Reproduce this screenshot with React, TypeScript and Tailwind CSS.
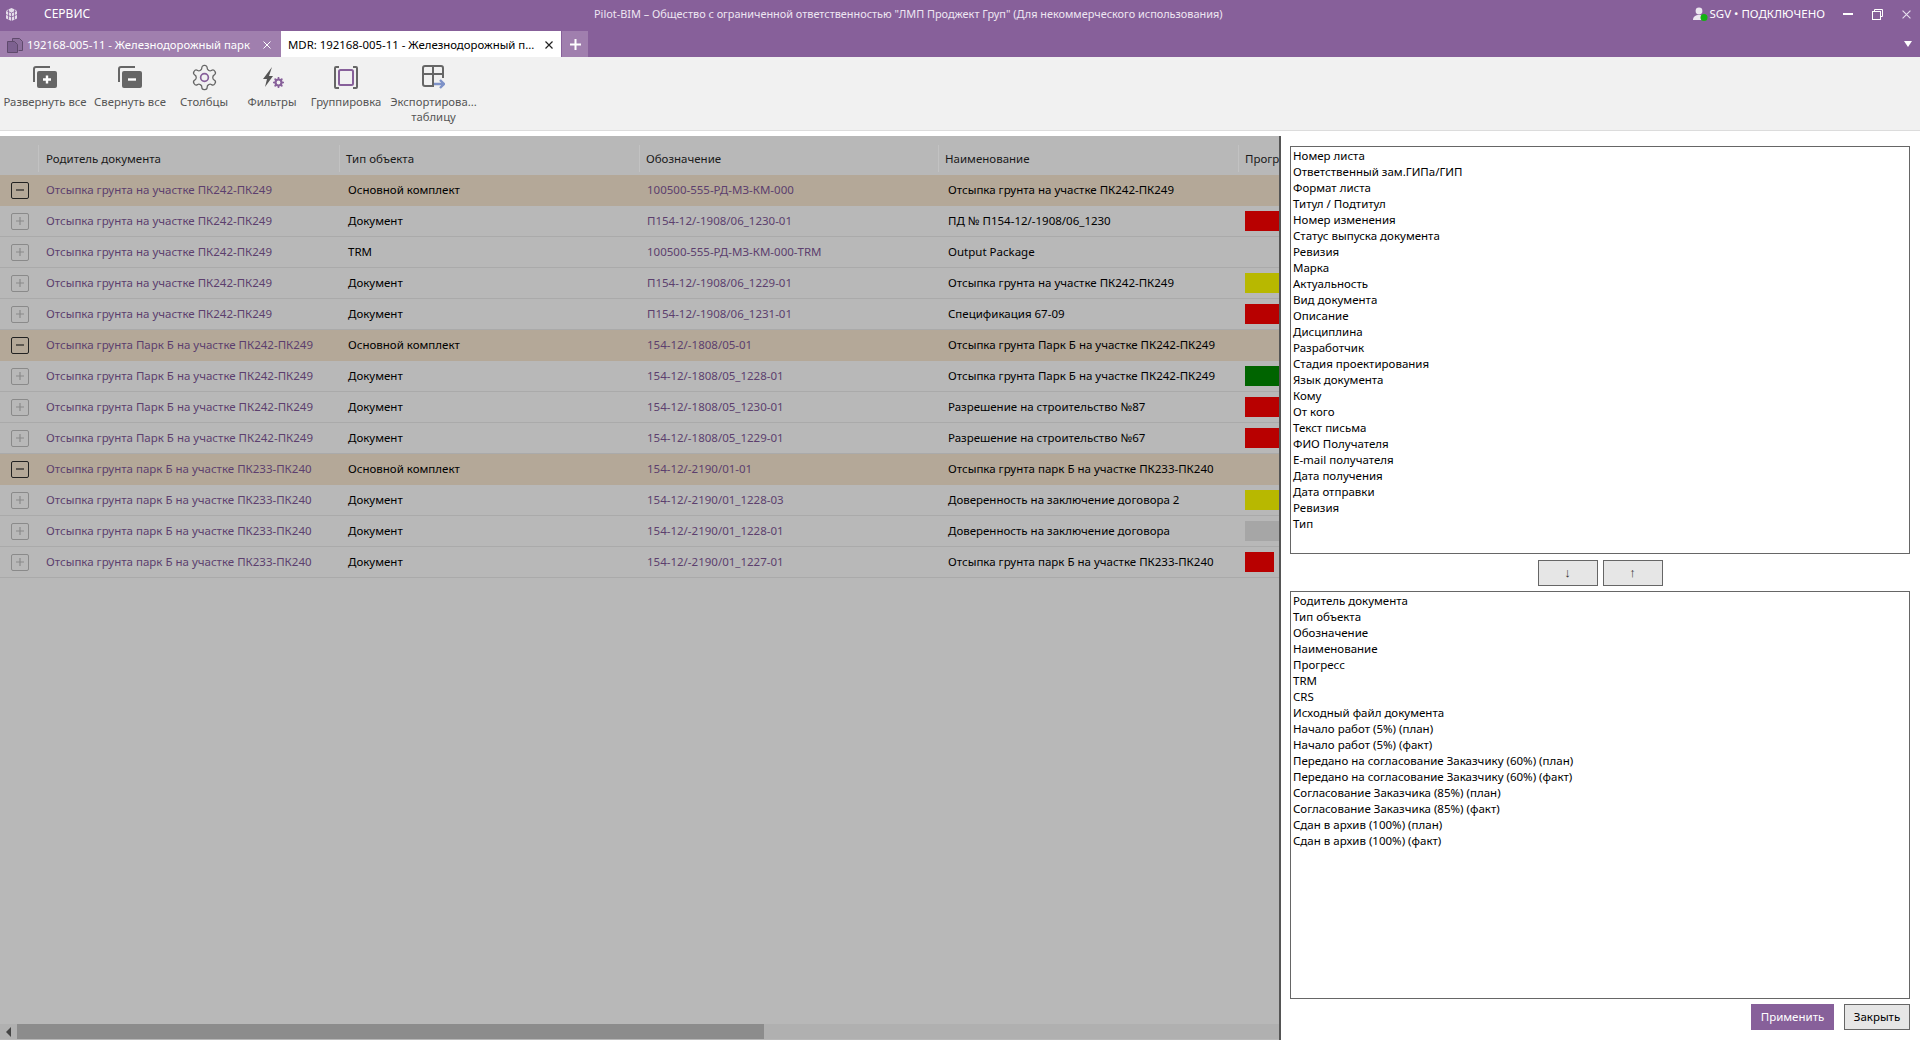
const FONT = "font-['Noto_Sans','Open_Sans',sans-serif]";

const GEAR_PATH =
  "M12.22 2h-.44a2 2 0 0 0-2 2v.18a2 2 0 0 1-1 1.73l-.43.25a2 2 0 0 1-2 0l-.15-.08a2 2 0 0 0-2.73.73l-.22.38a2 2 0 0 0 .73 2.73l.15.1a2 2 0 0 1 1 1.72v.51a2 2 0 0 1-1 1.74l-.15.09a2 2 0 0 0-.73 2.73l.22.38a2 2 0 0 0 2.73.73l.15-.08a2 2 0 0 1 2 0l.43.25a2 2 0 0 1 1 1.73V20a2 2 0 0 0 2 2h.44a2 2 0 0 0 2-2v-.18a2 2 0 0 1 1-1.73l.43-.25a2 2 0 0 1 2 0l.15.08a2 2 0 0 0 2.73-.73l.22-.39a2 2 0 0 0-.73-2.73l-.15-.08a2 2 0 0 1-1-1.74v-.5a2 2 0 0 1 1-1.74l.15-.09a2 2 0 0 0 .73-2.73l-.22-.38a2 2 0 0 0-2.73-.73l-.15.08a2 2 0 0 1-2 0l-.43-.25a2 2 0 0 1-1-1.73V4a2 2 0 0 0-2-2z";

type Row = { parent: string; type: string; code: string; name: string; progress?: string; main?: boolean };

const P1 = "Отсыпка грунта на участке ПК242-ПК249";
const P2 = "Отсыпка грунта Парк Б на участке ПК242-ПК249";
const P3 = "Отсыпка грунта парк Б на участке ПК233-ПК240";

const rows: Row[] = [
  { parent: P1, type: "Основной комплект", code: "100500-555-РД-МЗ-КМ-000", name: P1, main: true },
  { parent: P1, type: "Документ", code: "П154-12/-1908/06_1230-01", name: "ПД № П154-12/-1908/06_1230", progress: "bg-[#b80000]" },
  { parent: P1, type: "TRM", code: "100500-555-РД-МЗ-КМ-000-TRM", name: "Output Package" },
  { parent: P1, type: "Документ", code: "П154-12/-1908/06_1229-01", name: P1, progress: "bg-[#b8b800]" },
  { parent: P1, type: "Документ", code: "П154-12/-1908/06_1231-01", name: "Спецификация 67-09", progress: "bg-[#b80000]" },
  { parent: P2, type: "Основной комплект", code: "154-12/-1808/05-01", name: P2, main: true },
  { parent: P2, type: "Документ", code: "154-12/-1808/05_1228-01", name: P2, progress: "bg-[#006400]" },
  { parent: P2, type: "Документ", code: "154-12/-1808/05_1230-01", name: "Разрешение на строительство №87", progress: "bg-[#b80000]" },
  { parent: P2, type: "Документ", code: "154-12/-1808/05_1229-01", name: "Разрешение на строительство №67", progress: "bg-[#b80000]" },
  { parent: P3, type: "Основной комплект", code: "154-12/-2190/01-01", name: P3, main: true },
  { parent: P3, type: "Документ", code: "154-12/-2190/01_1228-03", name: "Доверенность на заключение договора 2", progress: "bg-[#b8b800]" },
  { parent: P3, type: "Документ", code: "154-12/-2190/01_1228-01", name: "Доверенность на заключение договора", progress: "bg-[#a6a6a6]" },
  { parent: P3, type: "Документ", code: "154-12/-2190/01_1227-01", name: P3, progress: "bg-[#b80000]" },
];

const availableColumns = [
  "Номер листа", "Ответственный зам.ГИПа/ГИП", "Формат листа", "Титул / Подтитул", "Номер изменения",
  "Статус выпуска документа", "Ревизия", "Марка", "Актуальность", "Вид документа", "Описание", "Дисциплина",
  "Разработчик", "Стадия проектирования", "Язык документа", "Кому", "От кого", "Текст письма", "ФИО Получателя",
  "E-mail получателя", "Дата получения", "Дата отправки", "Ревизия", "Тип",
];

const selectedColumns = [
  "Родитель документа", "Тип объекта", "Обозначение", "Наименование", "Прогресс", "TRM", "CRS",
  "Исходный файл документа", "Начало работ (5%) (план)", "Начало работ (5%) (факт)",
  "Передано на согласование Заказчику (60%) (план)", "Передано на согласование Заказчику (60%) (факт)",
  "Согласование Заказчика (85%) (план)", "Согласование Заказчика (85%) (факт)",
  "Сдан в архив (100%) (план)", "Сдан в архив (100%) (факт)",
];

function ThinX({ size = 8, color = "#fff", width = 1 }: { size?: number; color?: string; width?: number }) {
  return (
    <svg width={size} height={size} viewBox="0 0 8 8" className="shrink-0">
      <path d="M0.5 0.5l7 7M7.5 0.5l-7 7" stroke={color} strokeWidth={width} fill="none" />
    </svg>
  );
}

function ExpandIcon({ minus }: { minus?: boolean }) {
  return (
    <svg width="24" height="22" viewBox="0 0 24 22">
      <path d="M1 16V3a2 2 0 0 1 2-2h14" fill="none" stroke="#666" strokeWidth="2" />
      <rect x="4" y="5" width="20" height="17" rx="2" fill="#666" />
      <path d={minus ? "M10 13.5h8" : "M10 13.5h8M14 9.5v8"} stroke="#fff" strokeWidth="2.4" />
    </svg>
  );
}

function GearIcon() {
  return (
    <svg width="29" height="29" viewBox="0 0 24 24" fill="none" className="shrink-0">
      <path d={GEAR_PATH} stroke="#666" strokeWidth="1.05" />
      <circle cx="12" cy="12" r="3.2" stroke="#87609a" strokeWidth="1.4" />
    </svg>
  );
}

function FilterIcon() {
  return (
    <svg width="21" height="21" viewBox="0 0 21 21" className="shrink-0 ml-[3px]">
      <path d="M9 0 0 12h4l-2 8 8-11H6z" fill="#555" />
      <circle cx="15.5" cy="15.5" r="3" fill="none" stroke="#87609a" strokeWidth="2.2" />
      <path d="M15.5 10v2M15.5 19v2M10 15.5h2M19 15.5h2M11.6 11.6l1.4 1.4M18 18l1.4 1.4M11.6 19.4l1.4-1.4M18 13l1.4-1.4" stroke="#87609a" strokeWidth="1.6" />
    </svg>
  );
}

function GroupIcon() {
  return (
    <svg width="24" height="23" viewBox="0 0 24 23" fill="none">
      <path d="M5 1H2a1 1 0 0 0-1 1v19a1 1 0 0 0 1 1h3M19 1h3a1 1 0 0 1 1 1v19a1 1 0 0 1-1 1h-3" stroke="#666" strokeWidth="2" />
      <rect x="5" y="4" width="14" height="15" rx="1.5" stroke="#87609a" strokeWidth="2" />
    </svg>
  );
}

function ExportIcon() {
  return (
    <svg width="23" height="24" viewBox="0 0 23 24" fill="none">
      <path d="M12 21H3a2 2 0 0 1-2-2V3a2 2 0 0 1 2-2h16a2 2 0 0 1 2 2v10M1 9h20M11 1v20" stroke="#666" strokeWidth="2" />
      <path d="M12 19h10M18 15l4 4-4 4" stroke="#7e92c8" strokeWidth="2.4" />
    </svg>
  );
}

function ToolButton({ width, label, sub, children }: { width: string; label: string; sub?: string; children: React.ReactNode }) {
  return (
    <div className={`flex flex-col items-center pt-2 shrink-0 ${width}`}>
      <div className="h-6 flex items-center justify-center">{children}</div>
      <div className="text-[11.3px] leading-[15px] mt-[5px] text-[#555] whitespace-nowrap">{label}</div>
      {sub && <div className="text-[11.3px] leading-[15px] text-[#555]">{sub}</div>}
    </div>
  );
}

function HeaderCell({ label, last }: { label: string; last?: boolean }) {
  return (
    <div className={`h-[27px] pl-[6px] flex items-center whitespace-nowrap overflow-hidden text-[11.5px] text-[#1a1a1a] ${last ? "" : "border-r border-[#c2c2c2]"}`}>
      {label}
    </div>
  );
}

function ColumnList({ items, className }: { items: string[]; className: string }) {
  return (
    <div className={`border border-[#666] bg-white pl-[2px] pt-[1px] text-[11.5px] text-black ${className}`}>
      {items.map((item, i) => (
        <div key={i} className="h-4 leading-4 whitespace-nowrap">{item}</div>
      ))}
    </div>
  );
}

export default function App() {
  return (
    <div className={`h-screen w-full flex flex-col overflow-hidden bg-white ${FONT}`}>
      {/* title bar */}
      <div className="h-[31px] pb-[3px] bg-[#87609a] flex items-center text-white text-[12px] shrink-0">
        <div className="w-[594px] flex items-center shrink-0">
          <svg className="ml-[5px]" width="13" height="15" viewBox="0 0 13 15" fill="none">
            <path d="M6.5 1 12 3.5v8L6.5 14 1 11.5v-8z" fill="#e4dcea" />
            <path d="M1 3.5 6.5 6 12 3.5M6.5 6v8M3.5 2.5v10M9.5 2.5v10M1 7.5l5.5 2.5L12 7.5" stroke="#87609a" strokeWidth="0.8" />
          </svg>
          <span className="ml-[26px]">СЕРВИС</span>
        </div>
        <div className="whitespace-nowrap text-[10.9px] text-[#eee6f2]">
          Pilot-BIM – Общество с ограниченной ответственностью "ЛМП Проджект Груп" (Для некоммерческого использования)
        </div>
        <div className="ml-auto flex items-center">
          <svg width="16" height="15" viewBox="0 0 16 15">
            <circle cx="7" cy="4" r="3.4" fill="#ece6f0" />
            <path d="M1 13c0-3.5 2.5-5 6-5s5 1.5 5 5z" fill="#ece6f0" />
            <circle cx="12" cy="10.5" r="3.5" fill="#12b312" />
          </svg>
          <span className="text-[11.5px] ml-[2px]">SGV • ПОДКЛЮЧЕНО</span>
          <div className="ml-[18px] w-[10px] h-[2px] bg-white" />
          <svg className="ml-[19px]" width="11" height="11" viewBox="0 0 11 11" fill="none" stroke="#fff">
            <path d="M2.5 2.5V.5h8v7H8.5" />
            <rect x="0.5" y="2.5" width="8" height="8" />
          </svg>
          <div className="ml-[19px] mr-[9px]">
            <ThinX size={9} color="#e8dfee" />
          </div>
        </div>
      </div>

      {/* tabs */}
      <div className="h-[26px] bg-[#87609a] flex items-stretch text-[11.3px] shrink-0">
        <div className="w-[281px] bg-[#a07fae] flex items-center text-white pt-[2px]">
          <svg className="ml-[7px] shrink-0" width="16" height="15" viewBox="0 0 16 15" stroke="#5f4a6c">
            <path d="M5.5 3V.5h7l3 3v9h-4" fill="#8c6f9c" />
            <path d="M.5 3.5h7l3 3v8H.5z" fill="#7d6190" />
          </svg>
          <span className="ml-[4px] whitespace-nowrap">192168-005-11 - Железнодорожный парк</span>
          <div className="ml-auto mr-[10px]">
            <ThinX />
          </div>
        </div>
        <div className="w-[280px] bg-white flex items-center text-black pt-[2px]">
          <span className="ml-[7px] whitespace-nowrap text-[11.4px]">MDR: 192168-005-11 - Железнодорожный п...</span>
          <div className="ml-auto mr-[8px]">
            <ThinX color="#222" width={1.2} />
          </div>
        </div>
        <div className="w-[26px] ml-[1px] bg-[#a07fae] flex items-center justify-center">
          <svg width="11" height="11" viewBox="0 0 11 11">
            <path d="M5.5 0v11M0 5.5h11" stroke="#fff" strokeWidth="2" />
          </svg>
        </div>
        <div className="ml-auto mr-[8px] self-center w-0 h-0 border-x-[4px] border-x-transparent border-t-[6px] border-t-white" />
      </div>

      {/* toolbar */}
      <div className="h-[74px] bg-[#f1f1f1] border-b border-[#dcdcdc] flex items-start shrink-0">
        <ToolButton width="w-[90px]" label="Развернуть все"><ExpandIcon /></ToolButton>
        <ToolButton width="w-[80px]" label="Свернуть все"><ExpandIcon minus /></ToolButton>
        <ToolButton width="w-[68px]" label="Столбцы"><GearIcon /></ToolButton>
        <ToolButton width="w-[68px]" label="Фильтры"><FilterIcon /></ToolButton>
        <ToolButton width="w-[80px]" label="Группировка"><GroupIcon /></ToolButton>
        <ToolButton width="w-[95px]" label="Экспортирова..." sub="таблицу"><ExportIcon /></ToolButton>
      </div>
      <div className="h-[5px] bg-white shrink-0" />

      {/* body */}
      <div className="flex-1 flex min-h-0">
        <div className="w-[1279px] shrink-0 bg-[#b8b8b8] flex flex-col overflow-hidden">
          <div className="grid grid-cols-[39px_301px_300px_299px_300px_40px] pt-[9px] h-[39px] shrink-0">
            <HeaderCell label="" />
            <div className="h-[27px] pl-[7px] flex items-center whitespace-nowrap text-[11.5px] text-[#1a1a1a] border-r border-[#c2c2c2]">
              Родитель документа
            </div>
            <HeaderCell label="Тип объекта" />
            <HeaderCell label="Обозначение" />
            <HeaderCell label="Наименование" />
            <HeaderCell label="Прогресс" last />
          </div>
          <div className="flex-1 min-h-0">
            {rows.map((row, i) => (
              <div
                key={i}
                className={`grid grid-cols-[39px_301px_300px_299px_306px_34px] h-[31px] items-center text-[11.5px] whitespace-nowrap border-b ${
                  row.main ? "bg-[#b4a898] border-[#b4a898]" : "border-[#aaaaaa]"
                }`}
              >
                <div className="flex justify-center">
                  <div className={`w-[18px] h-[17px] rounded-[2px] border flex items-center justify-center ${row.main ? "border-[#222]" : "border-[#8a8a8a]"}`}>
                    <svg width="8" height="8" viewBox="0 0 8 8">
                      <path d={row.main ? "M0 4h8" : "M0 4h8M4 0v8"} stroke={row.main ? "#222" : "#8a8a8a"} strokeWidth="1.2" />
                    </svg>
                  </div>
                </div>
                <div className="pl-[7px] text-[#5c3f6e] overflow-hidden">{row.parent}</div>
                <div className="pl-[8px] text-black overflow-hidden">{row.type}</div>
                <div className="pl-[7px] text-[#5c3f6e] overflow-hidden">{row.code}</div>
                <div className="pl-[9px] text-black overflow-hidden">{row.name}</div>
                {row.progress && <div className={`h-5 ${i === rows.length - 1 ? "w-[29px]" : "w-[34px]"} ${row.progress}`} />}
              </div>
            ))}
          </div>
          <div className="h-[15px] mb-px shrink-0 bg-[#b0b0b0] flex items-center">
            <div className="w-[17px] flex justify-center">
              <div className="w-0 h-0 border-y-[5px] border-y-transparent border-r-[5px] border-r-[#444]" />
            </div>
            <div className="w-[747px] h-full bg-[#8c8c8c]" />
          </div>
        </div>
        <div className="w-[2px] bg-[#555] shrink-0" />

        {/* column chooser */}
        <div className="flex-1 flex flex-col pt-[10px] pl-[9px] pr-[10px] pb-[10px] min-w-0">
          <ColumnList items={availableColumns} className="h-[408px] shrink-0" />
          <div className="h-[37px] flex items-center justify-center gap-[5px] shrink-0">
            <button className="w-[60px] h-[26px] bg-[#e6e6e6] border border-[#666] text-[13px] font-bold text-[#333]">↓</button>
            <button className="w-[60px] h-[26px] bg-[#e6e6e6] border border-[#666] text-[13px] font-bold text-[#333]">↑</button>
          </div>
          <ColumnList items={selectedColumns} className="flex-1 min-h-0" />
          <div className="h-[31px] pt-[5px] flex justify-end gap-[10px] shrink-0">
            <button className="w-[83px] h-[26px] bg-[#87609a] text-white text-[11.5px]">Применить</button>
            <button className="w-[66px] h-[26px] bg-[#e6e6e6] border border-[#666] text-black text-[11.5px]">Закрыть</button>
          </div>
        </div>
      </div>
    </div>
  );
}
